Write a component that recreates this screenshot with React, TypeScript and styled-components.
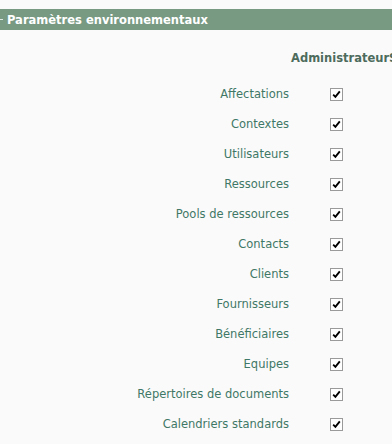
import React from 'react';
import styled, { createGlobalStyle } from 'styled-components';

const GlobalStyle = createGlobalStyle`
  body {
    margin: 0;
    background: #fafafa;
    font-family: "DejaVu Sans", Verdana, sans-serif;
  }
`;

const Page = styled.div`
  width: 392px;
  height: 444px;
  overflow: hidden;
  padding-top: 9px;
  box-sizing: border-box;
`;

const TitleBar = styled.div`
  height: 21px;
  background-color: #789a83;
  display: flex;
  align-items: center;
  color: #fff;
  font-weight: bold;
  font-size: 11.5px;
  white-space: nowrap;
`;

const Toggle = styled.span`
  width: 3px;
  height: 1px;
  background: #dfe8e2;
  margin-right: 4px;
`;

const Grid = styled.div`
  display: grid;
  grid-template-columns: 289px 1fr;
  margin-top: 13px;
`;

const ColumnHead = styled.div`
  grid-column: 2;
  height: 30px;
  display: flex;
  align-items: center;
  padding-left: 2px;
  color: #4d6b5c;
  font-weight: bold;
  font-size: 11.5px;
  white-space: nowrap;
  overflow: hidden;
  margin-bottom: 6px;
`;

const Label = styled.div`
  height: 30px;
  display: flex;
  align-items: center;
  justify-content: flex-end;
  color: #3f7866;
  font-size: 11.5px;
  white-space: nowrap;
`;

const Cell = styled.div`
  height: 30px;
  display: flex;
  align-items: center;
  padding-left: 41px;
`;

const Box = styled.span`
  width: 11px;
  height: 11px;
  border: 1px solid #9a9a9a;
  background: #fff;
  display: flex;
  align-items: center;
  justify-content: center;
`;

const Check = () => (
  <Box>
    <svg width="9" height="9" viewBox="0 0 9 9">
      <path d="M1.2 4.6 L3.4 6.8 L7.8 1.4" fill="none" stroke="#000" strokeWidth="1.9" />
    </svg>
  </Box>
);

const items = [
  'Affectations',
  'Contextes',
  'Utilisateurs',
  'Ressources',
  'Pools de ressources',
  'Contacts',
  'Clients',
  'Fournisseurs',
  'Bénéficiaires',
  'Equipes',
  'Répertoires de documents',
  'Calendriers standards',
];

export default function App(): JSX.Element {
  return (
    <Page>
      <GlobalStyle />
      <TitleBar>
        <Toggle />
        Paramètres environnementaux
      </TitleBar>
      <Grid>
        <ColumnHead>AdministrateurSystème</ColumnHead>
        {items.map(item => (
          <React.Fragment key={item}>
            <Label>{item}</Label>
            <Cell>
              <Check />
            </Cell>
          </React.Fragment>
        ))}
      </Grid>
    </Page>
  );
}
